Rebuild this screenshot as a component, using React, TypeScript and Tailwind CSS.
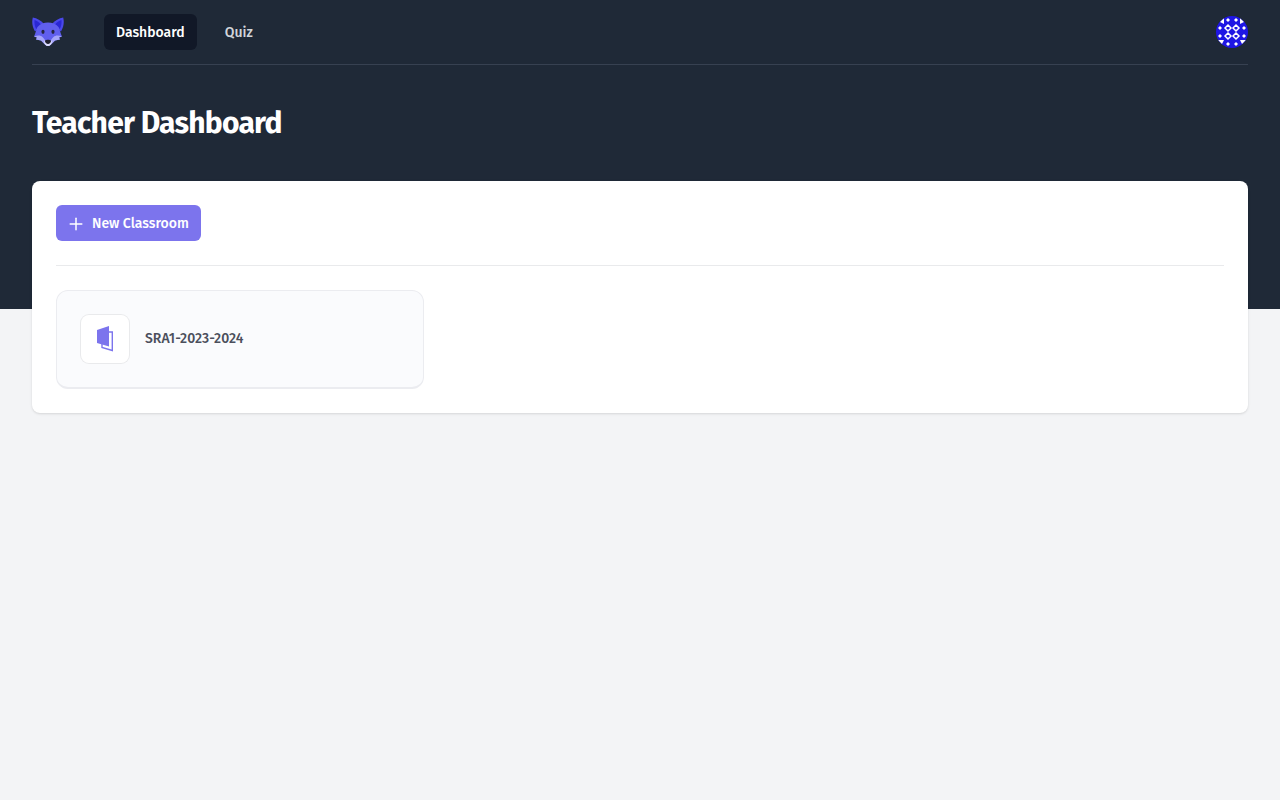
import React from 'react';
import { Plus } from 'lucide-react';

const navigation = [
  { name: 'Dashboard', href: '#dashboard', current: true },
  { name: 'Quiz', href: '#quiz', current: false },
];

const classrooms = [{ id: 1, name: 'SRA1-2023-2024' }];

function FoxLogo() {
  return (
    <svg viewBox="0 0 32 32" className="size-8" aria-hidden="true">
      <path d="M.8 1.5C-.4 6 .3 11 3 15.5L12 8C9 4.5 5 2 .8 1.5zM31.2 1.5C32.4 6 31.7 11 29 15.5L20 8c3-3.5 7-6 11.2-6.5z" fill="#4a48ea" />
      <path d="M2.5 4c-.3 3.5.3 6.500 1.700 9L9 8.500C7.300 6.500 5 4.800 2.500 4zM29.500 4c.3 3.500-.3 6.500-1.700 9L23 8.500c1.700-2 4-3.700 6.500-4.500z" fill="#2a27d4" />
      <path d="M16 6.5c-4 0-8 1.2-10.500 4.500C4 14 3.500 17.500 2 20.500l3 1-1 2 5 1 4 4c2 2 4 2 6 0l4-4 5-1-1-2 3-1c-1.500-3-2-6.500-3.500-9.500C24 7.700 20 6.500 16 6.500z" fill="#605fee" />
      <path d="M2 20.5c3.500-1.500 6.500-1.500 8.500.5 1.500 1.500 2 2.500 3 3.500h5c1-1 1.500-2 3-3.500 2-2 5-2 8.500-.5l-3 1 1 2-5 1-4 4c-2 2-4 2-6 0l-4-4-5-1 1-2z" fill="#a5a5fa" />
      <path d="M12 24.500c0 3 1.500 5.500 4 5.500s4-2.500 4-5.500c-1 2-7 2-8 0z" fill="#dcdcfc" />
      <path d="M13 24.500c1-1 5-1 6 0 .3 2-1.700 3.500-3 3.500s-3.300-1.500-3-3.500z" fill="#20202f" />
      <ellipse cx="11" cy="15.800" rx="1.600" ry="2.100" fill="#252542" />
      <ellipse cx="21" cy="15.800" rx="1.600" ry="2.100" fill="#252542" />
    </svg>
  );
}

function Avatar() {
  return (
    <svg viewBox="0 0 32 32" className="size-8 rounded-full" aria-hidden="true">
      <path d="M0 0h32v32H0z" fill="#1f16e4" />
      <g fill="#fff">
        <path d="M12 2l2 2-2 2-2-2zM20 2l2 2-2 2-2-2zM12 26l2 2-2 2-2-2zM20 26l2 2-2 2-2-2z" />
        <path d="M4 10l2 2-2 2-2-2zM28 10l2 2-2 2-2-2zM4 18l2 2-2 2-2-2zM28 18l2 2-2 2-2-2z" />
        <path d="M8 2v6L4 6zM24 2v6l4-2zM2 24h6l-2 4zM30 24h-6l2 4z" />
      </g>
      <path
        d="M12 9l3 3-3 3-3-3zM20 9l3 3-3 3-3-3zM12 17l3 3-3 3-3-3zM20 17l3 3-3 3-3-3z"
        fill="none"
        stroke="#fff"
        strokeWidth="1.5"
      />
    </svg>
  );
}

function ClassroomIcon() {
  return (
    <svg viewBox="0 0 16 26" className="h-[26px] w-4" aria-hidden="true">
      <path d="M11 6h4.300v18.500L5 21.500v-5" fill="none" stroke="#7c74ed" strokeWidth="1.400" />
      <path d="M0 4L12 0v20.500L0 17z" fill="#7c74ed" />
    </svg>
  );
}

export default function App() {
  return (
    <div className="min-h-screen bg-gray-100 font-['Fira_Sans','Noto_Sans',sans-serif]">
      <div className="bg-[#1f2937] pb-32">
        <nav className="px-8">
          <div className="flex h-[65px] items-center justify-between border-b border-[#374151]">
            <div className="flex items-center">
              <a href="#home" aria-label="Home">
                <FoxLogo />
              </a>
              <div className="ml-10 flex gap-4">
                {navigation.map((item) => (
                  <a
                    key={item.name}
                    href={item.href}
                    aria-current={item.current ? 'page' : undefined}
                    className={
                      item.current
                        ? 'rounded-md bg-[#111827] px-3 pt-2 pb-1.5 text-sm leading-[22px] font-medium text-white'
                        : 'rounded-md px-3 pt-2 pb-1.5 text-sm leading-[22px] font-medium text-[#d1d5db] hover:bg-gray-700 hover:text-white'
                    }
                  >
                    {item.name}
                  </a>
                ))}
              </div>
            </div>
            <button type="button" aria-label="Open user menu" className="rounded-full">
              <Avatar />
            </button>
          </div>
        </nav>
        <header className="px-8 py-10">
          <h1 className="text-3xl font-bold tracking-tight text-white">Teacher Dashboard</h1>
        </header>
      </div>

      <main className="-mt-32 px-8 pb-12">
        <div className="rounded-lg bg-white p-6 shadow">
          <div className="border-b border-[#e9eaec] pb-6">
            <button
              type="button"
              className="flex items-center gap-1.5 rounded-md bg-[#7c74ed] pt-2 pr-3 pb-1.5 pl-2.5 text-sm leading-[22px] font-medium text-white"
            >
              <Plus size={20} strokeWidth={1.8} />
              New Classroom
            </button>
          </div>
          <ul className="grid grid-cols-3 gap-8 pt-6">
            {classrooms.map((classroom) => (
              <li key={classroom.id}>
                <a
                  href="#classroom"
                  className="flex items-center gap-4 rounded-xl border border-b-2 border-[#ebecf0] bg-[#fafbfd] p-6"
                >
                  <span className="flex size-12 items-center justify-center rounded-lg bg-white ring-1 ring-[#e9eaec]">
                    <ClassroomIcon />
                  </span>
                  <span className="text-sm leading-[22px] font-medium text-[#4b4f5c]">{classroom.name}</span>
                </a>
              </li>
            ))}
          </ul>
        </div>
      </main>
    </div>
  );
}
